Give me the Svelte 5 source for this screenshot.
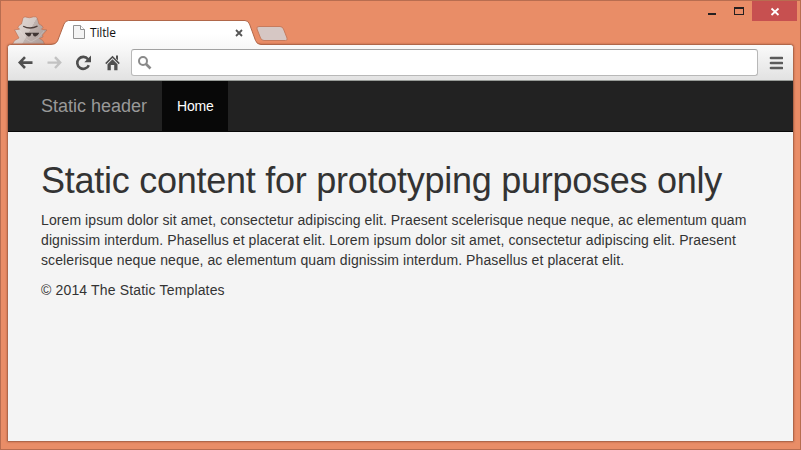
<script>
  const paragraph =
    'Lorem ipsum dolor sit amet, consectetur adipiscing elit. Praesent scelerisque neque neque, ac elementum quam dignissim interdum. Phasellus et placerat elit. Lorem ipsum dolor sit amet, consectetur adipiscing elit. Praesent scelerisque neque neque, ac elementum quam dignissim interdum. Phasellus et placerat elit.';
</script>

<div class="window">
  <header class="titlebar">
    <svg class="incognito" width="38" height="30" viewBox="0 0 38 30" aria-hidden="true">
      <defs>
        <linearGradient id="coat" x1="0" x2="1" y2=".45">
          <stop offset="0" stop-color="#e5dcd8" />
          <stop offset=".6" stop-color="#d3c8c4" />
          <stop offset=".61" stop-color="#bfb2ae" />
          <stop offset="1" stop-color="#b1a29e" />
        </linearGradient>
      </defs>
      <path d="M10.500 9L12 3Q12.500 1.800 14.500 2Q18.500 3.600 22.500 1.800Q25.500 1.300 26.200 3L28 9Q32 10.500 32 12.500L30.500 14.200L36 15L31.500 20L32 22L28.500 23.500Q33 25 33.500 29H1.500Q2.500 25 8 23L3.500 14.800L8.500 14.200L7 12.500Q7 10.500 10.500 9Z" fill="url(#coat)" stroke="#b86d50" stroke-opacity=".6" />
      <path d="M12.200 11.200Q19 14.800 26.500 11.200" fill="none" stroke="#4c3d3a" stroke-width="1.300" />
      <path d="M14 18H20.300Q20 21.800 17.500 21.500Q15 21 14 18M21.700 18H28Q27 21 24.500 21.500Q22 21.800 21.700 18" fill="#403533" />
      <path d="M14 18.200H28" stroke="#403533" stroke-width=".8" />
      <path d="M9 16L15 24L20 27L27 23L33 16" fill="none" stroke="#eee5e2" stroke-width=".7" opacity=".4" />
    </svg>
    <div class="tab">
      <svg class="tab-shape" width="210" height="27" viewBox="0 0 210 27" aria-hidden="true">
        <defs>
          <linearGradient id="tabfill" x1="0" x2="0" y1="0" y2="1">
            <stop offset="0" stop-color="#fff" />
            <stop offset=".5" stop-color="#fff" />
            <stop offset="1" stop-color="#f8f8f8" />
          </linearGradient>
        </defs>
        <path d="M0 27V24.500Q5 24.500 6.500 21L13 4Q14.500.5 17.500 .5H194Q197 .5 198.500 4L204.500 20.500Q206 24.500 210 24.500V27Z" fill="url(#tabfill)" />
        <path d="M0 24.500Q5 24.500 6.500 21L13 4Q14.500.5 17.500 .5H194Q197 .5 198.500 4L204.500 20.500Q206 24.500 210 24.500" fill="none" stroke="#b0674a" />
      </svg>
      <svg class="page-icon" width="12" height="15" viewBox="0 0 12 15" aria-hidden="true">
        <path d="M.5.5H7.500L11.500 4.500V13.500H.5Z" fill="#f4f4f4" stroke="#929292" />
        <path d="M7.500.5V4.500H11.500" fill="#fff" stroke="#929292" />
      </svg>
      <span class="tab-title">Tiltle</span>
      <svg class="tab-close" width="8" height="8" viewBox="0 0 8 8" aria-label="Close tab">
        <path d="M1 1L7 7M7 1L1 7" stroke="#555" stroke-width="1.800" />
      </svg>
    </div>
    <svg class="new-tab" width="34" height="18" viewBox="0 0 34 18" aria-label="New tab">
      <path d="M3 1.500H24Q26.500 1.500 27.500 4L31 13Q32 15.500 29.500 15.500H8Q5.500 15.500 4.500 13L1 4Q0 1.500 3 1.500Z" fill="#d6c7c4" stroke="#c77b5d" />
    </svg>
    <div class="controls">
      <svg width="97" height="20" viewBox="0 0 97 20" aria-hidden="true">
        <path d="M7 12H15V14H7Z" fill="#252020" />
        <path d="M33 6H43V14H33ZM34 8V13H42V8Z" fill="#252020" fill-rule="evenodd" />
        <path d="M51 0H96V20H51Z" fill="#c75050" />
        <path d="M70.500 7.500L77.500 14M77.500 7.500L70.500 14" stroke="#fff" stroke-width="1.800" />
      </svg>
    </div>
  </header>

  <div class="frame">
    <div class="toolbar">
      <div class="nav-icons">
        <svg width="16" height="16" viewBox="0 0 16 16" aria-label="Back">
          <path d="M8 2.200L2.800 7.600L8 13M3 7.600H15.500" fill="none" stroke="#505050" stroke-width="2.600" />
        </svg>
        <svg width="16" height="16" viewBox="0 0 16 16" aria-label="Forward">
          <path d="M9 2.200L14.200 7.600L9 13M14 7.600H1.500" fill="none" stroke="#c2c2c2" stroke-width="2.400" />
        </svg>
        <svg width="16" height="16" viewBox="0 0 16 16" aria-label="Reload">
          <path d="M13 4.200A6 6 0 1 0 13.800 10.200" fill="none" stroke="#4e4e4e" stroke-width="2.600" />
          <path d="M16 .6V7.300H9.300Z" fill="#4e4e4e" />
        </svg>
        <svg width="16" height="16" viewBox="0 0 16 16" aria-label="Home">
          <path d="M8.500 .7L15.800 8L14.700 9.200L8.500 3L2.300 9.200L1.200 8ZM12 .5H14V5.500L12 3.500Z" fill="#505050" />
          <path d="M3.500 9.300L8.500 4.300L13.500 9.300V15.200H10.200V10H6.800V15.200H3.500Z" fill="#505050" />
        </svg>
      </div>
      <div class="address">
        <svg width="16" height="16" viewBox="0 0 16 16" aria-hidden="true">
          <circle cx="6" cy="6" r="4" fill="none" stroke="#8a8a8a" stroke-width="2" />
          <path d="M9 9L13.500 13.500" stroke="#8a8a8a" stroke-width="2.600" />
        </svg>
      </div>
      <svg class="menu" width="14" height="14" viewBox="0 0 14 14" aria-label="Menu">
        <path d="M2 2H13M2 7H13M2 12H13" stroke="#5b5b5b" stroke-width="2.700" stroke-linecap="round" />
      </svg>
    </div>

    <nav>
      <span class="brand">Static header</span>
      <span class="active">Home</span>
    </nav>
    <main>
      <h1>Static content for prototyping purposes only</h1>
      <p>{paragraph}</p>
      <p class="copyright">© 2014 The Static Templates</p>
    </main>
  </div>
</div>

<style>
  .window {
    box-sizing: border-box;
    width: 801px;
    height: 450px;
    border: 1px solid #b86d50;
    background: #e98d67;
    padding: 0 6px 7px;
    display: flex;
    flex-direction: column;
    overflow: hidden;
    font-family: "Liberation Sans", Arial, sans-serif;
  }
  svg { display: block; flex: none; }
  .titlebar {
    height: 43px;
    flex: none;
    display: flex;
    align-items: flex-start;
  }
  .incognito { margin: 14px 0 0 4px; }
  .tab {
    position: relative;
    z-index: 1;
    width: 210px;
    height: 27px;
    flex: none;
    box-sizing: border-box;
    margin: 19px 0 0 2px;
    padding: 0 18px 2px 22px;
    display: flex;
    align-items: center;
  }
  .tab-shape { position: absolute; inset: 0; }
  .page-icon, .tab-title, .tab-close { position: relative; }
  .tab-title {
    flex: 1;
    margin-left: 5px;
    color: #111;
    font: 12px/16px "Open Sans", "Noto Sans", sans-serif;
    letter-spacing: -0.15px;
  }
  .new-tab { margin: 24px 0 0 -5px; }
  .controls { margin: 0 -4px 0 auto; }
  .frame {
    flex: 1;
    display: flex;
    flex-direction: column;
    border: 1px solid #b0674a;
    border-radius: 4px 4px 1px 1px;
    box-shadow: 0 0 2px #a6573b;
    background: #f4f4f4;
  }
  .toolbar {
    height: 36px;
    flex: none;
    box-sizing: border-box;
    border-bottom: 1px solid #989c98;
    border-radius: 3px 3px 0 0;
    background: linear-gradient(#fafafa, #e2e2e2);
    display: flex;
    align-items: center;
    padding: 0 10px 0 9px;
  }
  .nav-icons { display: flex; gap: 13px; }
  .address {
    flex: 1;
    height: 27px;
    box-sizing: border-box;
    margin: 0 11px;
    padding-left: 5px;
    display: flex;
    align-items: center;
    border: 1px solid #b8b8b8;
    border-top-color: #a2a2a2;
    border-radius: 3px;
    background: #fff;
  }
  nav {
    height: 50px;
    flex: none;
    display: flex;
    background: #222;
    border-bottom: 1px solid #080808;
    padding-left: 33px;
    line-height: 50px;
  }
  .brand {
    width: 121px;
    color: #999;
    font-size: 18px;
  }
  .active {
    width: 66px;
    box-sizing: border-box;
    padding-left: 15px;
    color: #fff;
    background: #080808;
    font-size: 14px;
    letter-spacing: -0.15px;
  }
  main {
    padding: 29px 38px 0 33px;
    color: #333;
    font-size: 14px;
    line-height: 20px;
    letter-spacing: 0.09px;
  }
  h1 {
    margin: 0 0 10px;
    font-size: 36px;
    font-weight: 400;
    line-height: 39px;
    letter-spacing: -0.26px;
    white-space: nowrap;
  }
  p { margin: 0 0 10px; }
  .copyright { letter-spacing: 0.16px; }
</style>
